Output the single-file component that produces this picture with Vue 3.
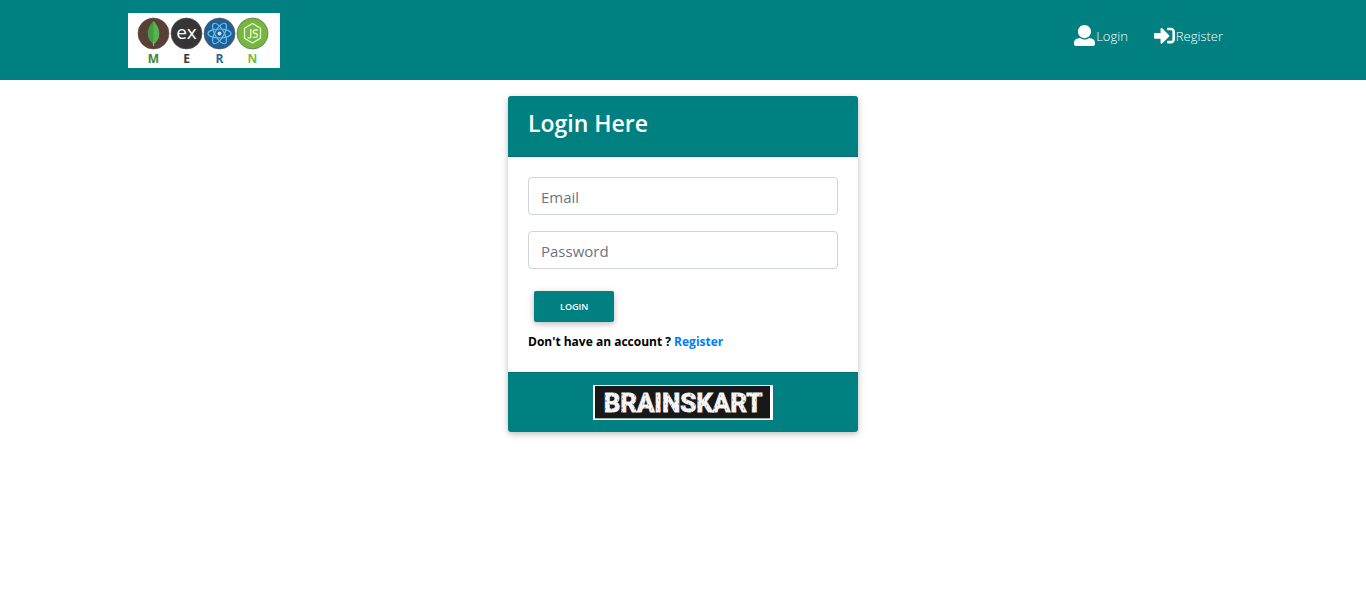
<script setup>
import { ref } from 'vue'

const email = ref('')
const password = ref('')
</script>

<template>
  <header class="navbar">
    <div class="container">
      <a class="brand" href="#" aria-label="MERN home">
        <svg width="152" height="55" viewBox="0 0 152 55" role="img" aria-label="MERN">
          <rect width="152" height="55" fill="#fff" />
          <g stroke="#555" stroke-opacity=".6" stroke-width="1">
            <circle cx="25.5" cy="20.5" r="15.500" fill="#5a3f37" />
            <circle cx="58.5" cy="20.5" r="15.500" fill="#353535" />
            <circle cx="91.5" cy="20.5" r="15.500" fill="#235f96" />
            <circle cx="124.5" cy="20.5" r="15.500" fill="#74b840" />
          </g>
          <path d="M25.5 8C21 13 19.500 17 19.800 21C20 26 23 29 25.500 31C28.500 29 31 26 31.200 21C31.400 16 29 12 25.500 8Z" fill="#449a45" />
          <path d="M25.500 8C29 12 31.400 16 31.200 21C31 26 28.500 29 25.500 31Z" fill="#5cb250" />
          <path d="M25.500 29V33" stroke="#b9ad9f" stroke-width="1" />
          <text class="express" x="58.500" y="26" text-anchor="middle" fill="#fff">ex</text>
          <g fill="none" stroke="#62c4f0" stroke-width="1.200">
            <ellipse cx="91.500" cy="20.500" rx="11.500" ry="4.500" />
            <ellipse cx="91.500" cy="20.500" rx="11.500" ry="4.500" transform="rotate(60 91.500 20.500)" />
            <ellipse cx="91.500" cy="20.500" rx="11.500" ry="4.500" transform="rotate(120 91.500 20.500)" />
          </g>
          <circle cx="91.500" cy="20.500" r="2" fill="#b9eaff" />
          <g fill="none" stroke="#edf8df" stroke-width="1.300" stroke-linejoin="round" stroke-linecap="round">
            <path d="M124.500 10.500L132.500 15.200V25.300L124.500 30L116.500 25.300V15.200Z" />
            <path d="M122.800 16.500V23.500Q122.800 25.500 120 24.600" />
            <path d="M129.500 17H127.500Q125.200 17 125.200 18.700T127.400 20.500T129.500 22.500T127.400 24.300H125.200" />
          </g>
          <g class="letters" text-anchor="middle">
            <text x="25.500" y="50" fill="#3a853d">M</text>
            <text x="58.500" y="50" fill="#3a3a3a">E</text>
            <text x="91.500" y="50" fill="#2c6597">R</text>
            <text x="124.500" y="50" fill="#7aba3f">N</text>
          </g>
        </svg>
      </a>
      <nav class="links">
        <a href="#login">
          <svg class="icon" viewBox="0 0 512 512" aria-hidden="true"><path d="M256 0c88.366 0 160 71.634 160 160s-71.634 160-160 160S96 248.366 96 160 167.634 0 256 0zm183.283 333.821l-71.313-17.828c-74.923 53.890-165.738 41.864-223.940 0l-71.313 17.828C29.981 344.505 0 382.903 0 426.955V464c0 26.510 21.490 48 48 48h416c26.510 0 48-21.490 48-48v-37.045c0-44.052-29.981-82.450-72.717-93.134z" /></svg>
          <span>Login</span>
        </a>
        <a href="#register">
          <svg class="icon" viewBox="0 0 512 512" aria-hidden="true"><path d="M416 448h-84c-6.600 0-12-5.400-12-12v-40c0-6.600 5.400-12 12-12h84c17.700 0 32-14.300 32-32V160c0-17.700-14.300-32-32-32h-84c-6.600 0-12-5.400-12-12V76c0-6.600 5.400-12 12-12h84c53 0 96 43 96 96v192c0 53-43 96-96 96zm-47-201L201 79c-15-15-41-4.500-41 17v96H24c-13.300 0-24 10.700-24 24v96c0 13.300 10.700 24 24 24h136v96c0 21.500 26 32 41 17l168-168c9.300-9.400 9.300-24.600 0-34z" /></svg>
          <span>Register</span>
        </a>
      </nav>
    </div>
  </header>

  <main class="page">
    <section class="card">
      <div class="card-header"><h1>Login Here</h1></div>
      <div class="card-body">
        <form @submit.prevent>
          <input v-model="email" type="email" placeholder="Email" aria-label="Email" />
          <input v-model="password" type="password" placeholder="Password" aria-label="Password" />
          <button type="submit">LOGIN</button>
        </form>
        <p>Don't have an account ? <a href="#register">Register</a></p>
      </div>
      <div class="card-footer">
        <svg width="180" height="35" viewBox="0 0 180 35" role="img" aria-label="Brainskart">
          <defs>
            <pattern id="grit" width="23" height="13" patternUnits="userSpaceOnUse">
              <rect width="23" height="13" fill="#f4f4f4" />
              <path d="M1 2h1M6 1h1M12 3h2M19 2h1M3 6h1M9 7h1M16 6h1M21 8h1M5 10h2M12 11h1M18 11h1" stroke="#777" />
            </pattern>
          </defs>
          <rect width="180" height="35" fill="#fff" />
          <rect x="2" y="1" width="175" height="32" fill="#181818" />
          <path d="M2 33.500H177" stroke="#aaa" />
          <text class="wordmark" x="90" y="27" text-anchor="middle" fill="url(#grit)" stroke="url(#grit)">BRAINSKART</text>
        </svg>
      </div>
    </section>
  </main>
</template>

<style>
body {
  margin: 0;
  background: #fff;
}
</style>

<style scoped>
.navbar,
.page {
  font-family: "Segoe UI", "Open Sans", "Noto Sans", sans-serif;
}
.navbar {
  background: #008080;
}
.container {
  box-sizing: border-box;
  max-width: 1140px;
  min-height: 80px;
  margin: 0 auto;
  padding: 13px 15px 12px;
  display: flex;
  justify-content: space-between;
  align-items: flex-start;
}
.brand svg,
.card-footer svg {
  display: block;
}
.express {
  font: 19px "Open Sans", sans-serif;
}
.letters {
  font: bold 12px "Open Sans", sans-serif;
}
.links {
  display: flex;
  gap: 26px;
  padding: 11px 15px 0 0;
}
.links a {
  display: flex;
  align-items: center;
  gap: 1px;
  color: #fff;
  font-size: 13px;
  font-weight: 300;
  line-height: 21px;
  text-decoration: none;
}
.links a span {
  padding-top: 2px;
}
.icon {
  width: 21px;
  height: 21px;
  fill: #fff;
}
.page {
  display: flex;
  justify-content: center;
  padding: 16px;
}
.card {
  width: 350px;
  max-width: 100%;
  border-radius: 4px;
  background: #fff;
  box-shadow: 0 2px 5px rgba(0, 0, 0, 0.16), 0 2px 10px rgba(0, 0, 0, 0.12);
}
.card-header {
  padding: 12px 20px;
  border-bottom: 1px solid #007070;
  border-radius: 3px 3px 0 0;
  background: #008080;
}
h1 {
  margin: 0 0 6px;
  color: #fff;
  font-size: 23px;
  font-weight: 600;
  line-height: 30px;
}
.card-body {
  padding: 20px;
}
form {
  display: flex;
  flex-direction: column;
  align-items: flex-start;
  gap: 16px;
}
input {
  box-sizing: border-box;
  width: 100%;
  height: 38px;
  padding: 6px 12px 4px;
  border: 1px solid #ced4da;
  border-radius: 4px;
  background: #fff;
  color: #495057;
  font-family: inherit;
  font-size: 15px;
}
input::placeholder {
  color: #6c757d;
  opacity: 1;
}
button {
  height: 31px;
  margin: 6px;
  padding: 0 26px;
  border: 0;
  border-radius: 2px;
  background: #008080;
  color: #fff;
  box-shadow: 0 2px 5px rgba(0, 0, 0, 0.16), 0 2px 10px rgba(0, 0, 0, 0.12);
  font-family: inherit;
  font-size: 9px;
  font-weight: 600;
}
p {
  margin: 3px 0 0;
  color: #000;
  font-size: 12px;
  font-weight: 700;
  line-height: 21px;
}
p a {
  color: #007bff;
  text-decoration: none;
}
.card-footer {
  display: flex;
  justify-content: center;
  padding: 12px 20px;
  border-top: 1px solid #007070;
  border-radius: 0 0 3px 3px;
  background: #008080;
}
.wordmark {
  font: bold 26px Roboto, sans-serif;
  stroke-width: 1px;
}
</style>
